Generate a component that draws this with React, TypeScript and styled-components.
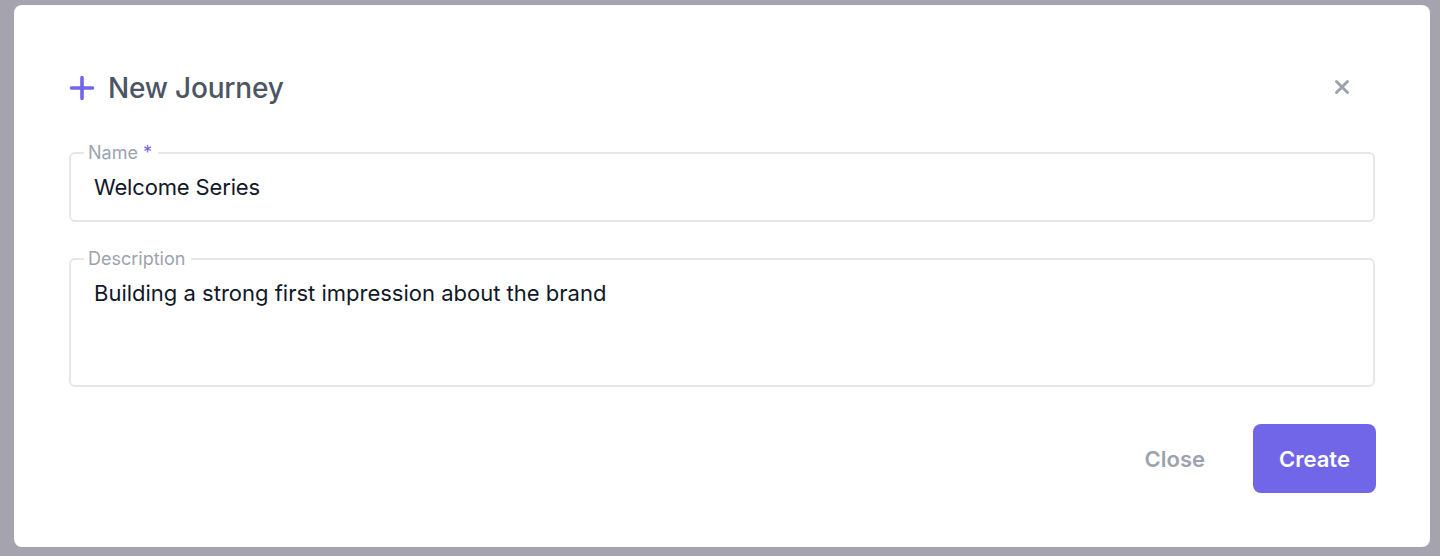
import React, { useState } from "react";
import styled, { createGlobalStyle } from "styled-components";

const GlobalStyle = createGlobalStyle`
	html, body {
		margin: 0;
		padding: 0;
		background: #a5a3ad;
		font-family: Inter, "Noto Sans", sans-serif;
	}
	* {
		box-sizing: border-box;
	}
`;

const Page = styled.div`
	height: 556px;
	padding: 5px 10px 0 14px;
`;

const Modal = styled.div`
	width: 1416px;
	height: 542px;
	background: #ffffff;
	border-radius: 8px;
	padding: 67px 55px 0 55px;
	display: flex;
	flex-direction: column;
`;

const Header = styled.div`
	display: flex;
	align-items: center;
	justify-content: space-between;
	height: 32px;
`;

const Title = styled.h2`
	display: flex;
	align-items: center;
	gap: 13px;
	margin: 0;
	font-size: 28px;
	font-weight: 500;
	color: #4b5563;
	letter-spacing: -0.2px;
`;

const CloseX = styled.button`
	border: none;
	background: none;
	padding: 0;
	margin-right: 25px;
	margin-top: -2px;
	display: flex;
	cursor: pointer;
`;

const Field = styled.fieldset<{ $tall?: boolean }>`
	margin: ${(p) => (p.$tall ? "26px" : "38px")} 0 0 0;
	padding: 0 23px 0 23px;
	border: 2px solid #e5e7eb;
	border-radius: 6px;
	height: ${(p) => (p.$tall ? "139px" : "80px")};
	min-width: 0;
`;

const Legend = styled.legend`
	margin-left: -10px;
	padding: 0 6px 0 4px;
	font-size: 18px;
	line-height: 22px;
	color: #9ca3af;
	font-weight: 400;
`;

const Star = styled.span`
	color: #7166e8;
	margin-left: 5px;
`;

const TextInput = styled.input`
	display: block;
	width: 100%;
	border: none;
	outline: none;
	padding: 0;
	margin-top: 7px;
	height: 32px;
	font-family: Inter, "Noto Sans", sans-serif;
	font-size: 22px;
	letter-spacing: -0.15px;
	color: #111827;
	background: transparent;
`;

const TextArea = styled.textarea`
	display: block;
	width: 100%;
	height: 100px;
	border: none;
	outline: none;
	resize: none;
	padding: 0;
	margin-top: 7px;
	font-family: Inter, "Noto Sans", sans-serif;
	font-size: 22px;
	line-height: 32px;
	color: #111827;
	background: transparent;
`;

const Footer = styled.div`
	display: flex;
	justify-content: flex-end;
	align-items: center;
	gap: 48px;
	margin-top: 37px;
	margin-right: -1px;
`;

const Button = styled.button<{ $primary?: boolean }>`
	border: none;
	cursor: pointer;
	font-family: Inter, "Noto Sans", sans-serif;
	font-size: 22px;
	font-weight: 600;
	height: 69px;
	border-radius: 8px;
	padding: 0;
	width: ${(p) => (p.$primary ? "123px" : "auto")};
	background: ${(p) => (p.$primary ? "#7166e8" : "transparent")};
	color: ${(p) => (p.$primary ? "#ffffff" : "#9ca3af")};
`;

const PlusIcon = () => (
	<svg width="26" height="26" viewBox="0 0 26 26">
		<path
			d="M13 2.5v21M2.5 13h21"
			stroke="#7166e8"
			strokeWidth="3.6"
			strokeLinecap="round"
		/>
	</svg>
);

const XIcon = () => (
	<svg width="16" height="16" viewBox="0 0 16 16">
		<path
			d="M2.5 2.5l11 11M13.5 2.5l-11 11"
			stroke="#9ca3af"
			strokeWidth="3"
			strokeLinecap="round"
		/>
	</svg>
);

export default function App() {
	const [name, setName] = useState("Welcome Series");
	const [desc, setDesc] = useState(
		"Building a strong first impression about the brand"
	);
	return (
		<Page>
			<GlobalStyle />
			<Modal>
				<Header>
					<Title>
						<PlusIcon />
						New Journey
					</Title>
					<CloseX aria-label="close">
						<XIcon />
					</CloseX>
				</Header>
				<Field>
					<Legend>
						Name<Star>*</Star>
					</Legend>
					<TextInput value={name} onChange={(e) => setName(e.target.value)} />
				</Field>
				<Field $tall>
					<Legend>Description</Legend>
					<TextArea value={desc} onChange={(e) => setDesc(e.target.value)} />
				</Field>
				<Footer>
					<Button>Close</Button>
					<Button $primary>Create</Button>
				</Footer>
			</Modal>
		</Page>
	);
}
